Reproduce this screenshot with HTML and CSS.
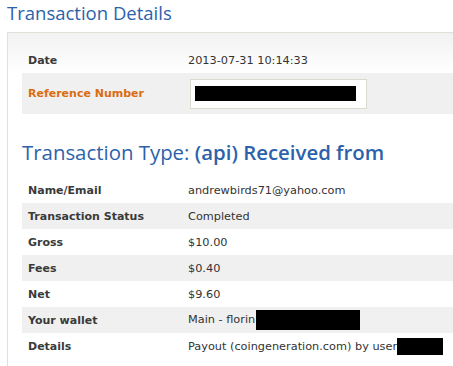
FILE: index.html
```html
<!DOCTYPE html>
<html lang="en">
<head>
  <meta charset="UTF-8" />
  <title>Transaction Details</title>
  <link rel="stylesheet" href="styles.css">
</head>
<body>
  <h1 class="page-title">Transaction Details</h1>

  <div class="panel">
    <table class="details top">
      <tr>
        <th>Date</th>
        <td>2013-07-31 10:14:33</td>
      </tr>
      <tr class="alt ref">
        <th class="orange">Reference Number</th>
        <td><div class="ref-box"><span class="redact ref-redact"></span></div></td>
      </tr>
    </table>

    <h2 class="type-title">Transaction Type: <b>(api) Received from</b></h2>

    <table class="details">
      <tr>
        <th>Name/Email</th>
        <td>andrewbirds71@yahoo.com</td>
      </tr>
      <tr class="alt">
        <th>Transaction Status</th>
        <td>Completed</td>
      </tr>
      <tr>
        <th>Gross</th>
        <td>$10.00</td>
      </tr>
      <tr class="alt">
        <th>Fees</th>
        <td>$0.40</td>
      </tr>
      <tr>
        <th>Net</th>
        <td>$9.60</td>
      </tr>
      <tr class="alt">
        <th>Your wallet</th>
        <td>Main - florin<span class="redact wallet-redact"></span></td>
      </tr>
      <tr>
        <th>Details</th>
        <td>Payout (coingeneration.com) by user<span class="redact user-redact"></span></td>
      </tr>
    </table>
  </div>
</body>
</html>
```

FILE: styles.css
```css
* {
  box-sizing: border-box;
}

body {
  margin: 0;
  background: #fff;
  font-family: "DejaVu Sans", Verdana, sans-serif;
  color: #333;
  overflow: hidden;
}

.page-title {
  margin: 0;
  padding: 0 0 0 7px;
  height: 32px;
  font-family: "Open Sans", sans-serif;
  font-weight: 400;
  font-size: 18.5px;
  color: #2c62ab;
}

.panel {
  margin-left: 7px;
  height: 334px;
  overflow: hidden;
  border: 1px solid #e2dfd7;
  border-right: none;
  border-bottom: none;
  background: linear-gradient(#f2f2f2, #fff 40px);
  padding: 14px 0 0 14px;
}

.details {
  width: 100%;
  border-collapse: collapse;
}

.details tr {
  height: 26px;
}

.details tr.alt {
  background: #f0f0f0;
}

.details tr.ref {
  height: 41px;
}

.details th {
  width: 166px;
  padding: 0 0 0 6px;
  text-align: left;
  font-size: 11px;
  font-weight: bold;
  color: #3a3a3a;
}

.details th.orange {
  color: #d96d12;
}

.details td {
  padding: 0;
  font-size: 11.3px;
  color: #333;
  white-space: nowrap;
}

.ref-box {
  width: 177px;
  height: 30px;
  margin-left: 2px;
  background: #fff;
  border: 1px solid #dcd9cf;
  padding: 6px 0 0 4px;
}

.redact {
  display: inline-block;
  background: #000;
  vertical-align: middle;
}

.ref-redact {
  width: 161px;
  height: 15px;
}

.wallet-redact {
  width: 104px;
  height: 20px;
  margin-left: 1px;
}

.user-redact {
  width: 46px;
  height: 17px;
}

.type-title {
  margin: 0;
  padding: 24px 0 11px;
  font-family: "Open Sans", sans-serif;
  font-weight: 400;
  font-size: 20.4px;
  color: #2c62ab;
}

.type-title b {
  font-weight: 600;
}
```
